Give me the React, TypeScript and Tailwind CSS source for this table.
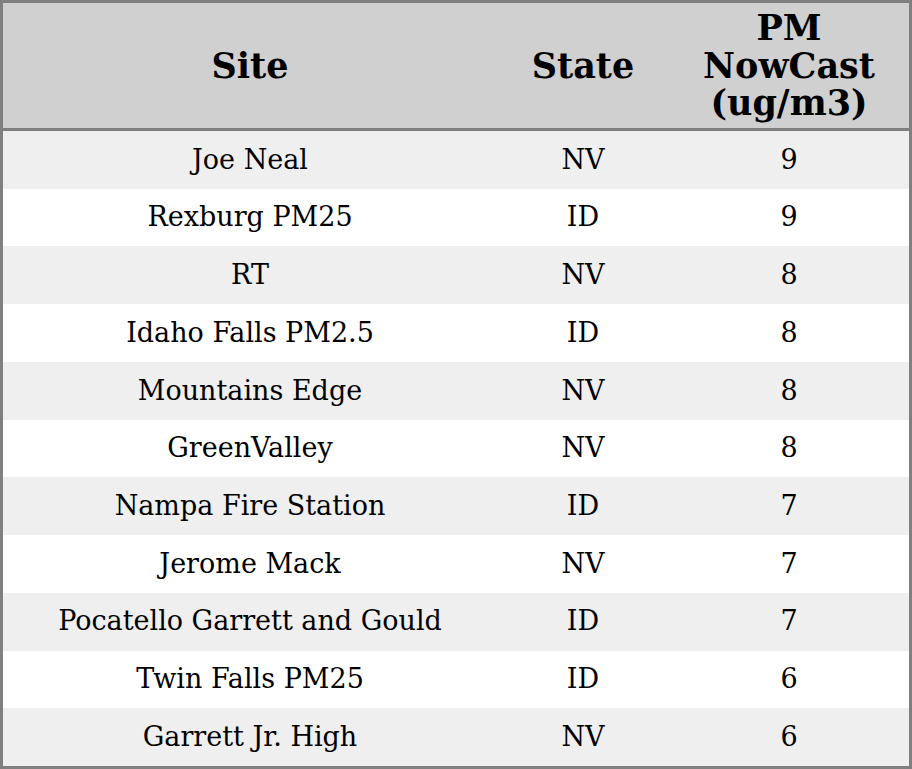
const ROWS: [string, string, number][] = [
  ["Joe Neal", "NV", 9],
  ["Rexburg PM25", "ID", 9],
  ["RT", "NV", 8],
  ["Idaho Falls PM2.5", "ID", 8],
  ["Mountains Edge", "NV", 8],
  ["GreenValley", "NV", 8],
  ["Nampa Fire Station", "ID", 7],
  ["Jerome Mack", "NV", 7],
  ["Pocatello Garrett and Gould", "ID", 7],
  ["Twin Falls PM25", "ID", 6],
  ["Garrett Jr. High", "NV", 6],
];

const COLS = "grid grid-cols-[494px_172px_1fr]";

export default function App() {
  return (
    <div className="w-[912px] h-[769px] border-[3px] border-[#808080] bg-white flex flex-col text-black font-['DejaVu_Serif',serif]">
      <div className={`${COLS} h-[128px] shrink-0 bg-[#d0d0d0] border-b-[3px] border-[#808080] text-[35px] font-bold leading-[37.5px] text-center`}>
        <div className="flex items-center justify-center">Site</div>
        <div className="flex items-center justify-center">State</div>
        <div className="flex items-center justify-center">
          PM
          <br />
          NowCast
          <br />
          (ug/m3)
        </div>
      </div>
      <div className="flex-1 grid grid-rows-[repeat(11,1fr)] text-[27px] text-center">
        {ROWS.map(([site, state, pm], i) => (
          <div key={site} className={`${COLS} items-center ${i % 2 === 0 ? "bg-[#efefef]" : "bg-white"}`}>
            <div>{site}</div>
            <div>{state}</div>
            <div>{pm}</div>
          </div>
        ))}
      </div>
    </div>
  );
}
